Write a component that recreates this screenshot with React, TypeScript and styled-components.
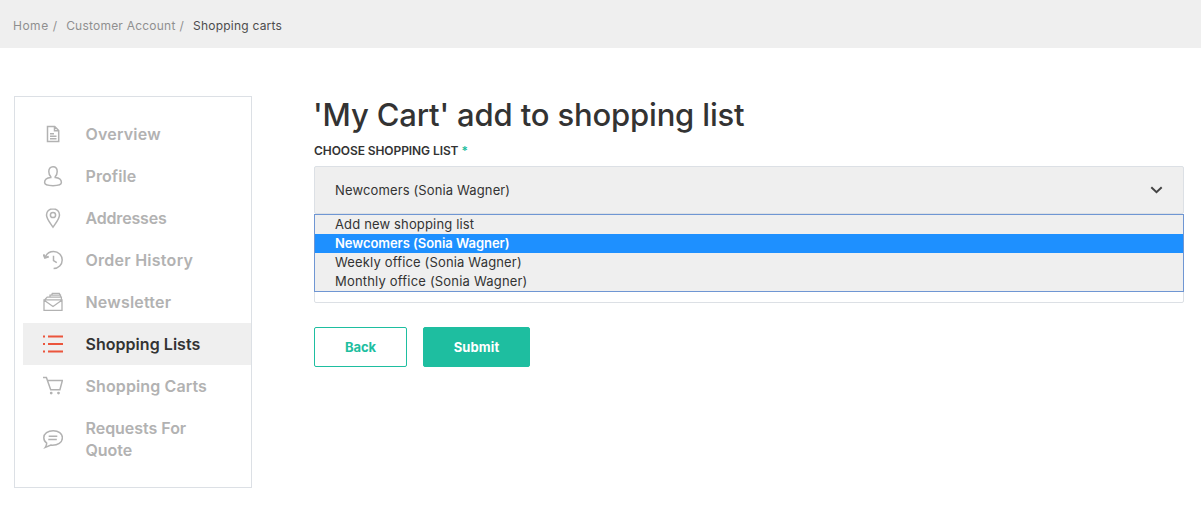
import React from "react";
import styled, { createGlobalStyle } from "styled-components";

const GlobalStyle = createGlobalStyle`
  *, *::before, *::after { box-sizing: border-box; }
  body {
    margin: 0;
    background: #fff;
    color: #333;
    font-family: Inter, "Liberation Sans", sans-serif;
  }
`;

const Breadcrumbs = styled.nav`
  display: flex;
  align-items: center;
  height: 48px;
  padding: 3px 14px 0 13px;
  background: #efefef;
  font-size: 12px;
  line-height: 20px;
`;

const Crumb = styled.span<{ $current?: boolean; $spacing: number }>`
  color: ${(p) => (p.$current ? "#4c4c4c" : "#8f8f8f")};
  letter-spacing: ${(p) => p.$spacing}px;
  white-space: nowrap;
`;

const Slash = styled.span`
  width: 13.5px;
  margin-left: 4px;
  color: #8f8f8f;
`;

const Page = styled.div`
  display: flex;
  align-items: flex-start;
  gap: 62px;
  padding: 48px 17px 0 14px;
`;

const Sidebar = styled.aside`
  flex: 0 0 238px;
  height: 392px;
  padding: 16px 0 16px 8px;
  border: 1px solid #dce0e5;
`;

const SidebarItem = styled.a<{ $active?: boolean }>`
  display: flex;
  align-items: center;
  padding: 10px 40px 10px 20px;
  background: ${(p) => (p.$active ? "#efefef" : "transparent")};
  color: ${(p) => (p.$active ? "#333" : "#b2b2b2")};
  font-size: 16px;
  font-weight: 600;
  line-height: 22px;

  svg {
    flex: 0 0 20px;
    margin-right: 22.5px;
    color: ${(p) => (p.$active ? "#eb553c" : "#b2b2b2")};
  }
`;

const SidebarLabel = styled.span<{ $spacing: number }>`
  letter-spacing: ${(p) => p.$spacing}px;
`;

const Main = styled.main`
  flex: 1;
  min-width: 0;
`;

const Title = styled.h1`
  margin: 0 0 0 -1px;
  height: 46px;
  font-size: 31px;
  font-weight: 500;
  line-height: 38px;
  letter-spacing: -0.16px;
  white-space: nowrap;
`;

const FieldLabel = styled.div`
  height: 24px;
  font-size: 12px;
  font-weight: 600;
  line-height: 17px;
  letter-spacing: -0.08px;
  text-transform: uppercase;

  span { color: #1ebea0; }
`;

const Field = styled.div`
  position: relative;
`;

const SelectBox = styled.div`
  display: flex;
  align-items: center;
  justify-content: space-between;
  height: 48px;
  padding: 0 20px;
  border: 1px solid #dce0e5;
  border-radius: 2px;
  background: #efefef;
  font-size: 13px;
  line-height: 20px;
  letter-spacing: 0.13px;
`;

const NameInput = styled.div`
  height: 49px;
  margin-top: 40px;
  border: 1px solid #dce0e5;
  border-radius: 2px;
`;

const Options = styled.div`
  position: absolute;
  top: 48px;
  left: 0;
  right: 0;
  border: 1px solid #6f96d3;
  background: #efefef;
`;

const Option = styled.div<{ $selected?: boolean; $spacing: number }>`
  height: 19px;
  padding-left: 20px;
  background: ${(p) => (p.$selected ? "#1e90ff" : "transparent")};
  color: ${(p) => (p.$selected ? "#fff" : "#333")};
  font-size: 13px;
  font-weight: ${(p) => (p.$selected ? 600 : 400)};
  line-height: 19px;
  letter-spacing: ${(p) => p.$spacing}px;
`;

const Actions = styled.div`
  display: flex;
  gap: 16px;
  margin-top: 24px;
`;

const Button = styled.button<{ $primary?: boolean }>`
  width: ${(p) => (p.$primary ? 107 : 93)}px;
  height: 40px;
  padding: 0;
  border: 1px solid #1ebea0;
  border-radius: 2px;
  background: ${(p) => (p.$primary ? "#1ebea0" : "#fff")};
  color: ${(p) => (p.$primary ? "#fff" : "#1ebea0")};
  font: 700 13px/20px Inter, "Liberation Sans", sans-serif;
  letter-spacing: ${(p) => (p.$primary ? 0.1 : -0.1)}px;
`;

const Icon = ({ children, width = 1.5 }: { children: React.ReactNode; width?: number }) => (
  <svg width="20" height="22" viewBox="0 0 20 22" fill="none" stroke="currentColor" strokeWidth={width}>
    {children}
  </svg>
);

const icons = {
  overview: (
    <Icon>
      <path d="M4.500 3.500h7.200l4 4v11H4.500zM11.500 3.700v4h4.200M7 10.800h4M7 13.300h6.500M7 15.800h6.500" />
    </Icon>
  ),
  profile: (
    <Icon>
      <path d="M10 1.800c-2.600 0-4.200 1.900-4.200 4.800 0 2.100.8 4 2 5.200v.7c-3.800.3-6.200 2.300-6.200 5.100 0 2.100 2.700 3.100 8.400 3.100s8.400-1 8.400-3.100c0-2.800-2.400-4.800-6.200-5.100v-.7c1.200-1.200 2-3.100 2-5.200 0-2.900-1.600-4.800-4.200-4.800z" />
    </Icon>
  ),
  addresses: (
    <Icon>
      <path d="M10 1.700c-3.800 0-6.500 2.800-6.500 6.300 0 3.700 3.300 7.500 6.500 12.200 3.200-4.700 6.500-8.500 6.500-12.200 0-3.500-2.700-6.300-6.500-6.300z" />
      <circle cx="10" cy="8" r="2.600" />
    </Icon>
  ),
  history: (
    <Icon>
      <path d="M2.300 8.200C3.600 4.700 6.800 2.500 10.600 2.500c4.800 0 8.600 3.800 8.600 8.500s-3.800 8.500-8.600 8.500M10.500 6.700v5l3.300 2" />
      <path d="M.5 5.300l1.500 3.500 3.800-1.200" strokeWidth="2" />
    </Icon>
  ),
  newsletter: (
    <Icon width={1.3}>
      <path d="M1 8.800h18v10.500H1zM1.200 9.300l8.800 6.200 8.800-6.200M1.800 8.700l2.400-2.600h14.200v2.600M7 6V4.200h10.500v1.700M8.700 4l.6-1.600h7l.9 1.700" />
    </Icon>
  ),
  lists: (
    <Icon width={2}>
      <path d="M0 3.500h2M5 3.500h15M0 11h2M5 11h15M0 18.500h2M5 18.500h15" />
    </Icon>
  ),
  carts: (
    <Icon>
      <path d="M0 2.600h3.400l4.300 12.100h9.200l2.500-9.300H5" />
      <circle cx="8.200" cy="18.100" r="1.400" fill="currentColor" stroke="none" />
      <circle cx="15.500" cy="18.100" r="1.400" fill="currentColor" stroke="none" />
    </Icon>
  ),
  quote: (
    <Icon>
      <path d="M10.200 2.700c-5.300 0-9.400 3-9.400 7 0 2.400 1.100 4.200 2.900 5.400 0 1.600-.5 3-1.400 4.300l5.600-2.300c7 .5 11.500-2.700 11.500-7.400 0-4-4-7-9.200-7zM5.700 8.300h8.600M5.300 11.600h8.500" />
    </Icon>
  ),
};

const menu: { icon: keyof typeof icons; label: string; spacing: number; active?: boolean }[] = [
  { icon: "overview", label: "Overview", spacing: 0.2 },
  { icon: "profile", label: "Profile", spacing: 0.08 },
  { icon: "addresses", label: "Addresses", spacing: -0.18 },
  { icon: "history", label: "Order History", spacing: 0.26 },
  { icon: "newsletter", label: "Newsletter", spacing: 0.2 },
  { icon: "lists", label: "Shopping Lists", spacing: 0.04, active: true },
  { icon: "carts", label: "Shopping Carts", spacing: 0.12 },
  { icon: "quote", label: "Requests For Quote", spacing: -0.03 },
];

const options = [
  { label: "Add new shopping list", spacing: 0.15 },
  { label: "Newcomers (Sonia Wagner)", spacing: -0.05, selected: true },
  { label: "Weekly office (Sonia Wagner)", spacing: 0.16 },
  { label: "Monthly office (Sonia Wagner)", spacing: 0.19 },
];

export default function App() {
  return (
    <>
      <GlobalStyle />
      <Breadcrumbs>
        <Crumb $spacing={0.5}>Home</Crumb>
        <Slash>/</Slash>
        <Crumb $spacing={0.22}>Customer Account</Crumb>
        <Slash>/</Slash>
        <Crumb $current $spacing={0.22}>Shopping carts</Crumb>
      </Breadcrumbs>
      <Page>
        <Sidebar>
          {menu.map((item) => (
            <SidebarItem key={item.label} $active={item.active}>
              {icons[item.icon]}
              <SidebarLabel $spacing={item.spacing}>{item.label}</SidebarLabel>
            </SidebarItem>
          ))}
        </Sidebar>
        <Main>
          <Title>'My Cart' add to shopping list</Title>
          <FieldLabel>
            Choose shopping list <span>*</span>
          </FieldLabel>
          <Field>
            <SelectBox>
              Newcomers (Sonia Wagner)
              <svg width="13" height="8" viewBox="0 0 13 8" fill="none" stroke="#444" strokeWidth="2">
                <path d="M1.300 1.300l5.200 4.900 5.200-4.900" />
              </svg>
            </SelectBox>
            <Options>
              {options.map((o) => (
                <Option key={o.label} $selected={o.selected} $spacing={o.spacing}>
                  {o.label}
                </Option>
              ))}
            </Options>
          </Field>
          <NameInput />
          <Actions>
            <Button>Back</Button>
            <Button $primary>Submit</Button>
          </Actions>
        </Main>
      </Page>
    </>
  );
}
